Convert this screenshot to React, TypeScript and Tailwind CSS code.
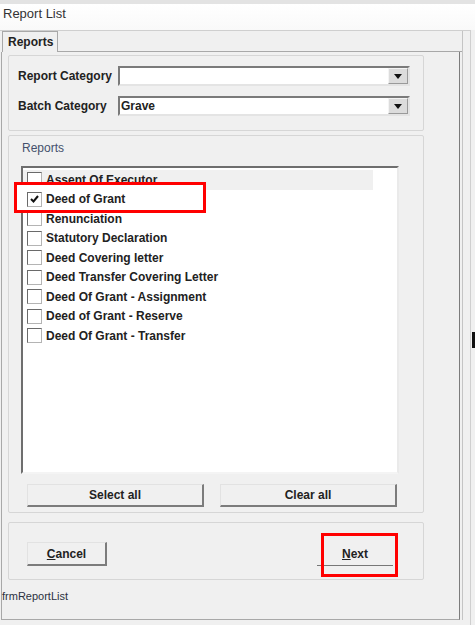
import { ReactNode } from 'react';

const reports = [
  'Assent Of Executor',
  'Deed of Grant',
  'Renunciation',
  'Statutory Declaration',
  'Deed Covering letter',
  'Deed Transfer Covering Letter',
  'Deed Of Grant - Assignment',
  'Deed of Grant - Reserve',
  'Deed Of Grant - Transfer',
];

function Combo({ value }: { value: string }) {
  return (
    <div className="flex h-[20px] w-[292px] items-stretch border-2 border-t-[#7a7a7a] border-l-[#7a7a7a] border-r-[#e4e4e4] border-b-[#e4e4e4] bg-white">
      <div className="flex flex-1 items-center pl-[1px] text-[12px] font-bold text-[#222]">{value}</div>
      <div className="flex w-[20px] items-center justify-center border border-t-[#f4f4f4] border-l-[#f4f4f4] border-r-[#9a9a9a] border-b-[#9a9a9a] bg-[#dcdcdc]">
        <svg width="8" height="5" viewBox="0 0 8 5">
          <path d="M0 0h8L4 5z" fill="#111" />
        </svg>
      </div>
    </div>
  );
}

function Checkbox({ checked }: { checked?: boolean }) {
  return (
    <div className="flex h-[15px] w-[15px] shrink-0 items-center justify-center border border-t-[#6a6a6a] border-l-[#6a6a6a] border-r-[#b4b4b4] border-b-[#b4b4b4] bg-white">
      {checked && (
        <svg width="9" height="8" viewBox="0 0 9 8">
          <path d="M1 4l2.5 2.5L8 1" stroke="#111" strokeWidth="2" fill="none" />
        </svg>
      )}
    </div>
  );
}

function WinButton({ children, className }: { children: ReactNode; className?: string }) {
  return (
    <button className={`flex items-center justify-center border border-t-[#e2e2e2] border-l-[#e2e2e2] border-r-2 border-b-2 border-r-[#7c7c7c] border-b-[#7c7c7c] bg-[#f0f0f0] text-[12px] font-bold text-[#222] ${className ?? ''}`}>
      {children}
    </button>
  );
}

export default function App() {
  return (
    <div className="relative h-[625px] w-[475px] overflow-hidden bg-[#f0f0f0] font-['Liberation_Sans',Arial,sans-serif]">
      {/* Title bar */}
      <div className="h-[30px] border-t-4 border-[#e3e3e3] bg-gradient-to-b from-white to-[#f9f9f9] pl-[3px] pt-[2px]">
        <div className="text-[13px] leading-[15px] text-[#333]">Report List</div>
      </div>

      {/* Window body */}
      <div className="h-[595px] w-[471px] border-t border-r border-[#cfcfcf]">
        <div className="w-[463px] border-r border-[#c4c4c4]">
          {/* Tab header */}
          <div className="flex h-[21px] items-end">
            <div className="ml-[2px] flex h-[21px] w-[56px] items-center border border-b-0 border-[#a8a8a8] bg-[#f0f0f0] pl-[5px] text-[12px] font-bold text-[#222]">
              Reports
            </div>
            <div className="flex-1 border-b border-[#a8a8a8]" />
          </div>

          {/* Tab panel */}
          <div className="ml-px flex h-[568px] w-[459px] flex-col border border-t-0 border-[#a8a8a8] border-r-[#7c7c7c] pl-[6px] pt-[3px]">
            {/* Categories */}
            <div className="flex h-[76px] w-[416px] flex-col gap-[10px] rounded-[2px] border border-[#d6d6d6] pl-[9px] pt-[10px]">
              <div className="flex items-center">
                <span className="w-[100px] text-[12px] font-bold text-[#222]">Report Category</span>
                <Combo value="" />
              </div>
              <div className="flex items-center">
                <span className="w-[100px] text-[12px] font-bold text-[#222]">Batch Category</span>
                <Combo value="Grave" />
              </div>
            </div>

            {/* Reports */}
            <div className="mt-[4px] flex h-[378px] w-[416px] flex-col rounded-[2px] border border-[#d6d6d6] pl-[12px] pt-[5px]">
              <span className="pl-px text-[12px] leading-[14px] text-[#44506c]">Reports</span>
              <div className="mt-[11px] h-[308px] w-[378px] overflow-hidden border-2 border-t-[#6e6e6e] border-l-[#6e6e6e] border-r-[#eaeaea] border-b-[#f4f4f4] bg-white pt-[2px]">
                {reports.map((name, i) => (
                  <div
                    key={name}
                    className={`flex h-[19.5px] items-center gap-[4px] pl-[4px] text-[12px] font-bold text-[#222] ${i === 0 ? 'mr-[24px] bg-[#f0f0f0]' : ''} ${i === 1 ? 'relative z-20' : ''}`}
                  >
                    <Checkbox checked={i === 1} />
                    <span>{name}</span>
                  </div>
                ))}
              </div>
              <div className="mt-[10px] flex gap-[16px] pl-[6px]">
                <WinButton className="h-[23px] w-[177px]">Select all</WinButton>
                <WinButton className="h-[23px] w-[177px]">Clear all</WinButton>
              </div>
            </div>

            {/* Actions */}
            <div className="mt-[9px] flex h-[58px] w-[416px] items-start rounded-[2px] border border-[#d6d6d6] pl-[18px] pt-[19px]">
              <WinButton className="h-[24px] w-[80px]">
                <span>
                  <span className="underline">C</span>ancel
                </span>
              </WinButton>
              <button className="ml-auto mr-[30px] flex h-[24px] w-[76px] items-center justify-center border-b border-[#777] text-[12px] font-bold text-[#222]">
                <span>
                  <span className="underline">N</span>ext
                </span>
              </button>
            </div>

            <span className="-ml-[6px] mt-[10px] text-[11px] leading-[13px] text-[#2b3140]">frmReportList</span>
          </div>
        </div>
      </div>

      {/* Edge marker on the right */}
      <div className="absolute left-[472px] top-[332px] h-[16px] w-[3px] bg-[#111]" />

      {/* Annotation boxes */}
      <div className="absolute left-[14px] top-[182px] z-10 h-[31px] w-[192px] border-[3px] border-[#ff0000] bg-white" />
      <div className="absolute left-[321px] top-[533px] z-10 h-[44px] w-[77px] border-[3px] border-[#ff0000]" />
    </div>
  );
}
